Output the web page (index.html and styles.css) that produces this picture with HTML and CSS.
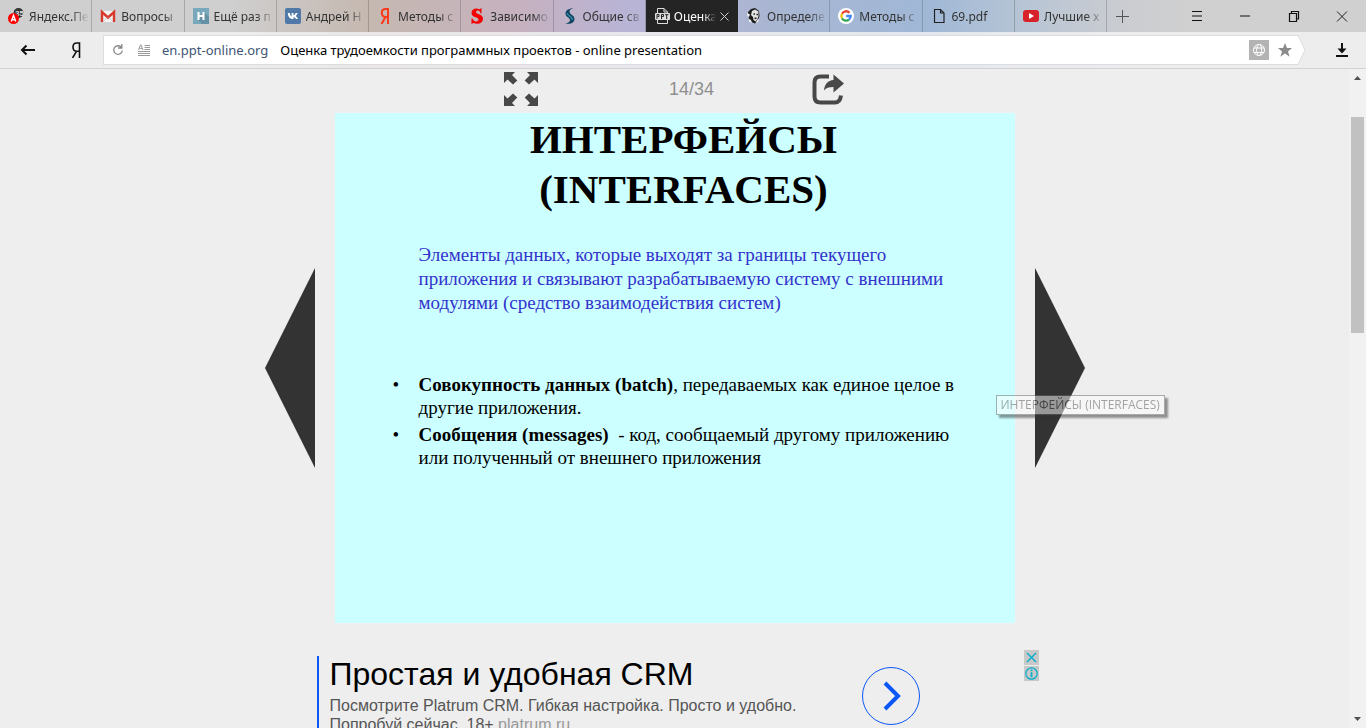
FILE: index.html
```html
<!DOCTYPE html>
<html lang="ru">
<head>
<meta charset="utf-8">
<title>Оценка трудоемкости программных проектов - online presentation</title>
<link rel="stylesheet" href="styles.css">
</head>
<body>
<header class="chrome">
  <div class="tabbar">
    <nav class="tabs" aria-label="Вкладки">
      <a class="tab" href="#">
        <svg class="ico" viewBox="0 0 16 16"><circle cx="10.500" cy="5" r="5" fill="#333"/><text x="7" y="8" font-size="8" font-weight="bold" fill="#ddd" font-family="Liberation Sans">35</text><circle cx="5.500" cy="10.500" r="5.500" fill="#f00"/><path d="M3.200 13.500 5.500 7.500 7.800 13.500M4 11.700h3" stroke="#fff" stroke-width="1.400" fill="none"/></svg>
        <span class="tab-label">Яндекс.Пе</span></a>
      <a class="tab" href="#">
        <svg class="ico" viewBox="0 0 16 16"><path d="M1 3h14v11H1z" fill="#f2f2f2"/><path d="M2 14V4l6 5.500L14 4v10" fill="none" stroke="#d8382c" stroke-width="2.400"/><path d="M3.500 13.500 7 9.500M12.500 13.500 9 9.500" stroke="#ccc" fill="none"/></svg>
        <span class="tab-label">Вопросы</span></a>
      <a class="tab" href="#">
        <svg class="ico" viewBox="0 0 16 16"><path d="M0 0h16v16H0z" fill="#79a8bc"/><path d="m11 4 5 5v7H9l-4-4z" fill="#6491a5"/><path d="M5.500 4v8M10.500 4v8M5.500 8h5" stroke="#fff" stroke-width="2"/></svg>
        <span class="tab-label">Ещё раз п</span></a>
      <a class="tab" href="#">
        <svg class="ico" viewBox="0 0 16 16"><rect width="16" height="16" rx="2" fill="#5079a8"/><path d="M2.800 5h2c.2 1.600.9 3.200 1.800 3.400V5h1.900v2.300C9.600 7.100 10.300 6 10.600 5h2c-.3 1.300-1.200 2.400-2 3 .9.500 1.900 1.500 2.400 3h-2.100c-.4-1-1.200-1.800-2.400-2v2h-.6C4.800 11 3 8.800 2.800 5z" fill="#fff"/></svg>
        <span class="tab-label">Андрей Н</span></a>
      <a class="tab" href="#">
        <svg class="ico" viewBox="0 0 16 16"><path d="M11 16V1H8.500C6 1 4.800 2.800 4.800 5c0 2.400 1.300 3.600 3 4M11 9H8.500L4.500 16" fill="none" stroke="#fb3a1d" stroke-width="2"/></svg>
        <span class="tab-label">Методы с</span></a>
      <a class="tab" href="#">
        <svg class="ico" viewBox="0 0 16 16"><path d="M12.500 5.500V0L10.500 1.200C6 -.5 2.500 1.500 2.500 5c0 5 7 3.500 7 6.500 0 1.500-1.300 2-2.500 2-2 0-3-1.500-3.500-3H2.500V16l2-1C9 17 14 15 14 10.800 14 5.500 7 7 7 4c0-1 .9-1.600 2-1.600 1.500 0 2.300 1.300 2.600 3.100z" fill="#f50000"/></svg>
        <span class="tab-label">Зависимо</span></a>
      <a class="tab" href="#">
        <svg class="ico" viewBox="0 0 16 16"><path d="M11.500 0C6.500.5 3.500 2.500 3.500 5.500 3.500 9 8 9.500 8 12.300 8 14 6 15 3.500 15.500 9 16.500 12.500 14.500 12.500 11 12.500 7 7.500 6.500 7.500 3.500 7.500 2 9 .8 11.500 0z" fill="#0f4560"/><path d="M5 5C5.500 8 10.500 8.500 10.500 12" fill="none" stroke="#3a86a8" stroke-width="1.400"/></svg>
        <span class="tab-label">Общие св</span></a>
      <div class="tab tab-active">
        <svg class="ico" viewBox="0 0 16 16"><path d="M3.500 5V.5H10L13.500 4v1M3.500 11.500v4h10v-4" fill="none" stroke="#ddd"/><path d="M10 .5V4h3.500" fill="none" stroke="#ddd"/><rect y="5" x="1" width="15" height="7" rx="1" fill="#ddd"/><path d="M3 11V6.500h2v2H3.500M7.500 11V6.500h2v2H8M11 6.700h3.500M12.700 7v4" stroke="#222" fill="none"/></svg>
        <span class="tab-label">Оценка</span>
        <button class="tab-close" aria-label="Закрыть вкладку"><svg viewBox="0 0 9 9"><path d="m.5.5 8 8m0-8-8 8" stroke="#ccc" fill="none"/></svg></button>
      </div>
      <a class="tab" href="#">
        <svg class="ico" viewBox="0 0 16 16"><path d="M2 4 5 1l4-1 4 3 .5 5-1.500 4-3 3.500-3.500-1.500L3 11z" fill="#1c1c1c"/><path d="m6 3 3-1.500 3.500 2V8l-1 3-2 2.500L7.500 12 7 9 5 7z" fill="#e4e4e4"/><path d="m1 5 3 1.500L3 9 1.500 8zM3 11l2 1 1 3-3-1.500zM12 11l1 1-2 3-1-1z" fill="#f0f0f0"/><path d="M7.500 6h1.500M10.500 6.500h1.500M8.500 10.500l2-.5" stroke="#222" stroke-width="1.300"/></svg>
        <span class="tab-label">Определе</span></a>
      <a class="tab" href="#">
        <svg class="ico" viewBox="0 0 16 16"><circle cx="8" cy="8" r="8" fill="#fff"/><g fill="none" stroke-width="2.300"><path d="M4 5.700A4.700 4.700 0 0 1 11.500 4.700" stroke="#ea4335"/><path d="M4 5.700A4.700 4.700 0 0 0 4 10.300" stroke="#fbbc05"/><path d="M4 10.300A4.700 4.700 0 0 0 11 11.600" stroke="#34a853"/><path d="M11 11.600A4.700 4.700 0 0 0 12.700 8H8.200" stroke="#4285f4"/></g></svg>
        <span class="tab-label">Методы с</span></a>
      <a class="tab" href="#">
        <svg class="ico" viewBox="0 0 16 16"><path d="M3.500 1.500h6l3.500 3.500v9.500H3.500zM9.500 1.500V5H13" fill="none" stroke="#222" stroke-width="1.200"/></svg>
        <span class="tab-label">69.pdf</span></a>
      <a class="tab" href="#">
        <svg class="ico" viewBox="0 0 16 16"><rect y="2" width="16" height="12" rx="3" fill="#d8222a"/><path d="m6 5 5 3-5 3z" fill="#fff"/></svg>
        <span class="tab-label">Лучшие х</span></a>
    </nav>
    <div class="window-controls">
      <button class="win new-tab" aria-label="Новая вкладка"><svg viewBox="0 0 14 14"><path d="M7.500 1v13M1 7.500h13" stroke="#555" fill="none"/></svg></button>
      <button class="win" aria-label="Меню"><svg viewBox="0 0 14 14"><path d="M2 2.500h10M2 7h10M2 11.500h10" stroke="#111" fill="none"/></svg></button>
      <button class="win" aria-label="Свернуть"><svg viewBox="0 0 14 14"><path d="M2 7h10" stroke="#111" fill="none"/></svg></button>
      <button class="win" aria-label="Восстановить"><svg viewBox="0 0 14 14"><path d="M2.500 4.500h7v8h-7zM4.500 4.500v-2h7v7.500h-2" stroke="#111" fill="none" stroke-width="1.200"/></svg></button>
      <button class="win" aria-label="Закрыть"><svg viewBox="0 0 14 14"><path d="m2 2.500 10 10m0-10-10 10" stroke="#222" fill="none"/></svg></button>
    </div>
  </div>
  <div class="toolbar">
    <button class="nav-btn" aria-label="Назад"><svg viewBox="0 0 16 16"><path d="M2 8h13M6.500 3.500 2 8l4.500 4.500" fill="none" stroke="#111" stroke-width="2"/></svg></button>
    <button class="nav-btn" aria-label="Яндекс"><svg viewBox="0 0 16 16"><path d="M11.500 16V1H8.800C6.500 1 5 2.500 5 5s1.500 4.300 3.800 4.300h2.700M8.500 9.300 4.500 16" fill="none" stroke="#111" stroke-width="1.600"/></svg></button>
    <div class="omnibox">
      <button class="mini" aria-label="Обновить"><svg viewBox="0 0 12 12"><path d="M9.500 3.500A4.300 4.300 0 1 0 10.300 6.500M9.800 0v4H6" fill="none" stroke="#888" stroke-width="1.300"/></svg></button>
      <button class="mini" aria-label="Режим чтения"><svg viewBox="0 0 12 12"><path d="M.5 6 2.500.8h.5L5 6M1.500 4.300H4M6.500 1.500H12M6.500 3.500H12M6.500 5.500H12M0 7.500h12M0 9.500h12M0 11.500h12" fill="none" stroke="#999"/></svg></button>
      <a class="domain" href="#">en.ppt-online.org</a>
      <input class="address" type="text" aria-label="Адрес" value="Оценка трудоемкости программных проектов - online presentation">
      <button class="translate" aria-label="Перевести"><svg viewBox="0 0 20 20"><path d="M0 0h20v20H0z" fill="#b3b3b3"/><g fill="none" stroke="#fff"><circle cx="10" cy="10" r="5.500"/><path d="M5 8h10M5 12.500h10M9.500 4.500C7 8 7 12 9.500 15.500M11 4.500c2.500 3.500 2 7.500 0 11"/></g></svg></button>
      <button class="star" aria-label="В закладки"><svg viewBox="0 0 16 16"><path d="m8 1 2 5h5l-4 3.400 1.600 5.300L8 11.500l-4.600 3.200L5 9.400 1 6h5z" fill="#8c8c8c"/></svg></button>
    </div>
    <svg class="omnibox-end" viewBox="0 0 8 30"><path d="M0 .5 7 15 0 29.500z" fill="#fff"/><path d="M0 .5 7 15 0 29.500" fill="none" stroke="#dcdce0"/></svg>
    <button class="download" aria-label="Загрузки"><svg viewBox="0 0 14 14"><path d="M7 0v6M1 13h12" stroke="#111" stroke-width="2"/><path d="M2.500 5.500h9L7 10.500z" fill="#111"/></svg></button>
  </div>
</header>
<div class="viewport">
  <main class="page">
    <div class="controls">
      <button class="ctl" aria-label="На весь экран"><svg viewBox="0 0 34 34" fill="#484848"><path id="arr" d="M0 0h11L8 3 13.300 8.500 9 12.500 3.500 7.500 0 11z"/><use href="#arr" transform="matrix(-1 0 0 1 34 0)"/><use href="#arr" transform="matrix(1 0 0 -1 0 34)"/><use href="#arr" transform="matrix(-1 0 0 -1 34 34)"/></svg></button>
      <span class="counter">14/34</span>
      <button class="ctl" aria-label="Поделиться"><svg viewBox="0 0 34 34"><path d="M18 4.500H9.500Q3.500 4.500 3.500 10.500v14q0 6 6 6H24q5 0 6-7" fill="none" stroke="#484848" stroke-width="4"/><path d="M22.500 2.500 33 11.500 22.500 20.500v-5.500c-4.500 0-8 1-9.500 3.500C13.500 12 17 8.500 22.500 8z" fill="#484848"/></svg></button>
    </div>
    <div class="stage">
      <button class="arrow" aria-label="Предыдущий слайд"><svg viewBox="0 0 50 200"><path d="M50 0v200L0 100z" fill="#333"/></svg></button>
      <article class="slide">
        <h1 class="slide-title">ИНТЕРФЕЙСЫ<br>(INTERFACES)</h1>
        <p class="lead">Элементы данных, которые выходят за границы текущего<br>приложения и связывают разрабатываемую систему с внешними<br>модулями (средство взаимодействия систем)</p>
        <ul class="points">
          <li><b>Совокупность данных (batch)</b>, передаваемых как единое целое в<br>другие приложения.</li>
          <li><b>Сообщения (messages)</b>&nbsp; - код, сообщаемый другому приложению<br>или полученный от внешнего приложения</li>
        </ul>
      </article>
      <div class="next">
        <button class="arrow" aria-label="Следующий слайд"><svg viewBox="0 0 50 200"><path d="M0 0v200L50 100z" fill="#333"/></svg></button>
        <span class="tooltip" role="tooltip">ИНТЕРФЕЙСЫ (INTERFACES)</span>
      </div>
    </div>
    <aside class="ad">
      <div class="ad-body">
        <div class="ad-copy">
          <a class="ad-title" href="#">Простая и удобная CRM</a>
          <p class="ad-text">Посмотрите Platrum CRM. Гибкая настройка. Просто и удобно.<br>Попробуй сейчас. 18+ <a class="ad-link" href="#">platrum.ru</a></p>
        </div>
        <button class="ad-go" aria-label="Перейти"><svg viewBox="0 0 58 58"><circle cx="29" cy="29" r="28.500" fill="none" stroke="#0b57f5"/><path d="m23 16 13 13-13 13" fill="none" stroke="#0b57f5" stroke-width="4"/></svg></button>
      </div>
      <div class="ad-marks">
        <button class="mark" aria-label="Закрыть рекламу"><svg viewBox="0 0 15 15"><path d="m3 3 9 9m0-9-9 9" stroke="#00aecd" stroke-width="1.400"/></svg></button>
        <button class="mark" aria-label="Об этом объявлении"><svg viewBox="0 0 15 15"><circle cx="7.500" cy="7.500" r="5.700" fill="none" stroke="#00aecd" stroke-width="1.200"/><path d="M7.500 3.500v1.800M7.500 6.300v5" stroke="#00aecd" stroke-width="1.800"/></svg></button>
      </div>
    </aside>
  </main>
  <div class="scrollbar">
    <svg class="tri" viewBox="0 0 7 4"><path d="M0 4h7L3.500 0z" fill="#505050"/></svg>
    <div class="track"><div class="thumb"></div></div>
    <svg class="tri" viewBox="0 0 7 4"><path d="M0 0h7L3.500 4z" fill="#505050"/></svg>
  </div>
</div>
</body>
</html>
```
FILE: styles.css
```css
* { box-sizing: border-box; }
body {
  margin: 0;
  height: 100vh;
  display: flex;
  flex-direction: column;
  overflow: hidden;
  background: #eee;
  font-family: "Liberation Sans", Arial, sans-serif;
}
button { border: 0; padding: 0; background: none; display: flex; align-items: center; justify-content: center; }
svg { display: block; }
a { color: inherit; text-decoration: none; }

.chrome {
  flex: none;
  font-family: "Noto Sans", "Open Sans", sans-serif;
  background: linear-gradient(90deg, #cfcfcf 17%, #c5b8b0 27%, #c6b1bf 38%, #b8b4d6 46%, #a8b6d2 57%, #a0b8d6 68%, #b7c5d5 75%, #c8cbd1 81%, #d0d0d0 87%);
}
.tabbar { display: flex; height: 32px; }
.tabs { flex: 1; min-width: 0; display: grid; grid-template-columns: repeat(12, minmax(0, 1fr)); }
.tab {
  min-width: 0;
  display: flex;
  align-items: center;
  gap: 5px;
  padding: 0 2px 0 8px;
  border-right: 1px solid rgba(80, 80, 90, .3);
  font-size: 12px;
  color: #333;
}
.ico { flex: none; width: 16px; height: 16px; }
.tab-label {
  flex: 1;
  min-width: 0;
  overflow: hidden;
  white-space: nowrap;
  -webkit-mask-image: linear-gradient(90deg, #000 70%, transparent 100%);
  mask-image: linear-gradient(90deg, #000 70%, transparent 100%);
}
.tab-active { gap: 4px; padding-right: 8px; background: #242424; color: #fff; border-color: #242424; }
.tab-close svg { width: 9px; height: 9px; }
.window-controls { flex: none; display: flex; width: 259px; }
.win { flex: 1; }
.win svg { width: 14px; height: 14px; }
.new-tab { flex: 0 0 66px; justify-content: flex-start; padding-left: 8px; }

.toolbar {
  display: flex;
  align-items: center;
  height: 37px;
  border-bottom: 1px solid #d2d2d4;
  background: rgba(243, 243, 243, .82);
}
.nav-btn { flex: 0 0 48px; padding-left: 8px; }
.nav-btn svg { width: 16px; height: 16px; }
.omnibox {
  flex: 1;
  display: flex;
  align-items: center;
  height: 30px;
  margin-left: 7px;
  padding: 0 5px 0 8px;
  border: 1px solid #dcdce0;
  border-right: 0;
  background: #fff;
  font-size: 13px;
}
.mini { flex: 0 0 26px; justify-content: flex-start; }
.mini svg { width: 12px; height: 12px; }
.domain { color: #3e5573; margin: 0 12px 0 -2px; }
.address { flex: 1; min-width: 0; border: 0; padding: 0; background: none; font: inherit; color: #000; }
.translate svg { width: 20px; height: 20px; }
.star { margin-left: 8px; }
.star svg { width: 16px; height: 16px; }
.omnibox-end { width: 8px; height: 30px; }
.download { flex: 0 0 60px; padding-left: 12px; }
.download svg { width: 14px; height: 14px; }

.viewport { flex: 1; min-height: 0; display: flex; }
.page { flex: 1; min-width: 0; overflow: hidden; }
.controls { display: flex; justify-content: center; align-items: center; gap: 97px; height: 44px; padding-bottom: 4px; }
.ctl svg { width: 34px; height: 34px; }
.counter { margin-left: 34px; font-size: 18px; color: #8f8f8f; }
.stage { display: flex; justify-content: center; align-items: center; gap: 20px; }
.arrow svg { width: 50px; height: 200px; }
.slide {
  width: 680px;
  min-height: 510px;
  padding: 1px 52px 0 84px;
  background: #cff;
  font-family: "Liberation Serif", "Times New Roman", serif;
  font-size: 19px;
  line-height: 24px;
}
.slide-title { margin: 0; padding-right: 14px; font-size: 41px; line-height: 50px; text-align: center; white-space: nowrap; }
.lead { margin: 29px 0 0; color: #33c; white-space: nowrap; }
.points { margin: 58px 0 0; padding: 0; list-style: none; white-space: nowrap; }
.points li { margin-bottom: 4px; line-height: 23px; }
.points li::before { content: "•"; display: inline-block; width: 26px; margin-left: -26px; }
.next { position: relative; }
.tooltip {
  position: absolute;
  left: -39px;
  top: 127px;
  padding: 0 4px;
  border: 1px solid #666;
  background: #fff;
  box-shadow: 3px 3px 2px #333;
  opacity: .5;
  color: #575757;
  font: 12px/18px "Open Sans", "Noto Sans", sans-serif;
  white-space: nowrap;
}

.ad { display: flex; justify-content: space-between; width: 728px; margin: 27px auto 0; padding-left: 6px; }
.ad-body { display: flex; align-items: flex-start; justify-content: space-between; flex: 0 0 603px; margin-top: 6px; border-left: 2px solid #0b57f5; padding-left: 11px; }
.ad-title { display: block; font-size: 32px; line-height: 36px; color: #000; white-space: nowrap; }
.ad-text { margin: 4px 0 0; font-size: 16px; line-height: 19px; color: #555; white-space: nowrap; }
.ad-link { color: #999; }
.ad-go { margin-top: 11px; }
.ad-go svg { width: 58px; height: 58px; }
.ad-marks { display: flex; flex-direction: column; gap: 1px; }
.mark { width: 15px; height: 15px; background: #c8c8c8; }
.mark svg { width: 15px; height: 15px; }

.scrollbar { flex: none; width: 17px; display: flex; flex-direction: column; align-items: center; padding: 7px 0; background: #f1f1f1; }
.tri { width: 7px; height: 4px; }
.track { flex: 1; width: 13px; padding-top: 37px; }
.thumb { height: 216px; background: #c1c1c1; }
```
